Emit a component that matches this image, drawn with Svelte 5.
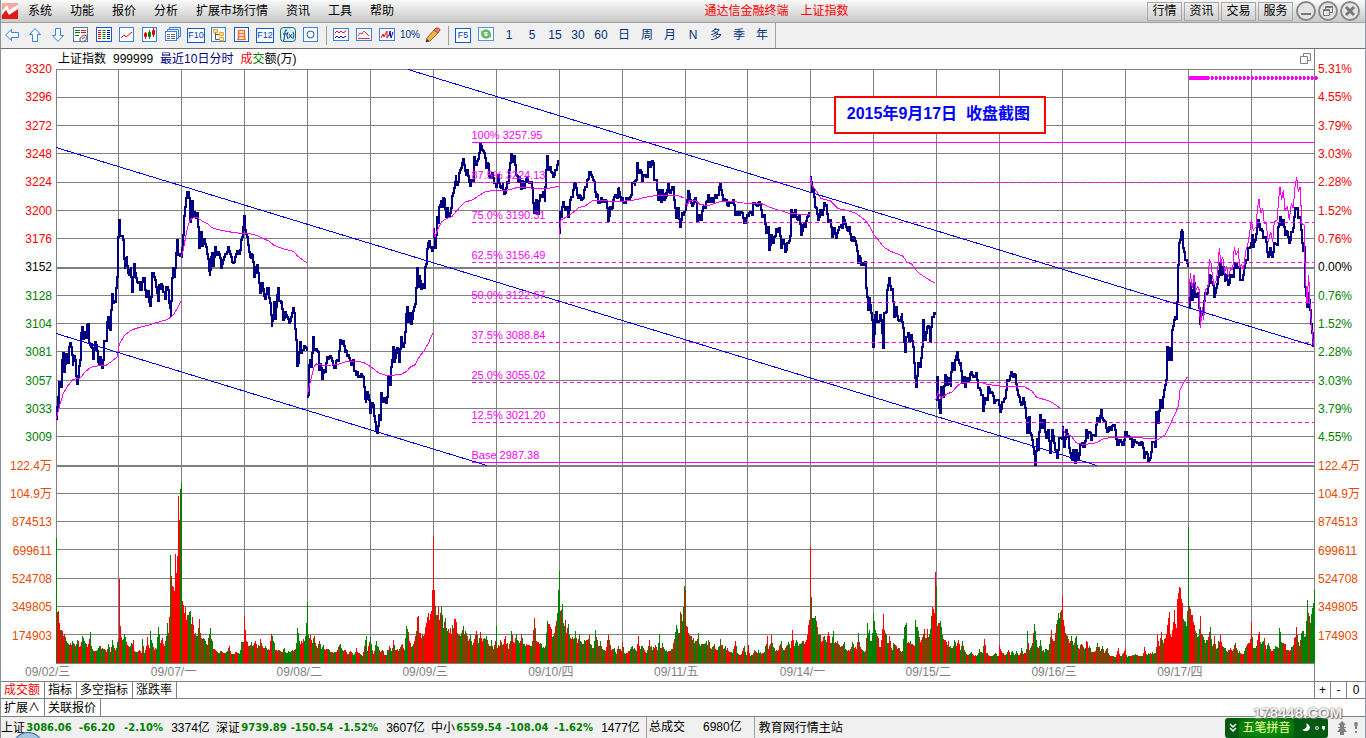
<script>
    const menus = ["系统", "功能", "报价", "分析", "扩展市场行情", "资讯", "工具", "帮助"];
    const panels = ["行情", "资讯", "交易", "服务"];
    const periods = ["1", "5", "15", "30", "60", "日", "周", "月", "N", "多", "季", "年"];
    const dates = ["09/02/三", "09/07/一", "09/08/二", "09/09/三", "09/10/四", "09/11/五", "09/14/一", "09/15/二", "09/16/三", "09/17/四"];
    const prices = ["3320", "3296", "3272", "3248", "3224", "3200", "3176", "3152", "3128", "3104", "3081", "3057", "3033", "3009"];
    const percents = ["5.31%", "4.55%", "3.79%", "3.03%", "2.28%", "1.52%", "0.76%", "0.00%", "0.76%", "1.52%", "2.28%", "3.03%", "3.79%", "4.55%"];
    const amounts = ["122.4万", "104.9万", "874513", "699611", "524708", "349805", "174903"];
    const tabs = ["成交额", "指标", "多空指标", "涨跌率"];
    const stocks = [
        { name: "上证", price: "3086.06", change: "-66.20", pct: "-2.10%", amount: "3374亿" },
        { name: "深证", price: "9739.89", change: "-150.54", pct: "-1.52%", amount: "3607亿" },
        { name: "中小", price: "6559.54", change: "-108.04", pct: "-1.62%", amount: "1477亿" }
    ];
    const fibs = [
        { y: 142, text: "100% 3257.95" },
        { y: 182, text: "87.5% 3224.13" },
        { y: 222, text: "75.0% 3190.31" },
        { y: 262, text: "62.5% 3156.49" },
        { y: 302, text: "50.0% 3122.67" },
        { y: 342, text: "37.5% 3088.84" },
        { y: 382, text: "25.0% 3055.02" },
        { y: 422, text: "12.5% 3021.20" },
        { y: 462, text: "Base 2987.38" }
    ];

    // chart space of the plot
    const plot = { x: 56, y: 69, w: 1259, h: 595 };
    const rows = [69, 97, 125, 153, 182, 210, 238, 295, 323, 351, 380, 408, 436, 493, 521, 549, 578, 606, 634, 663];
    const cols = [56, 118, 181, 244, 307, 370, 433, 496, 559, 622, 685, 747, 810, 873, 936, 999, 1062, 1125, 1188, 1251, 1314];

    // points are stored in thirds of a unit from the origin of each block
    const sessions = [
        {
            ox: 0, oy: 130,
            price: "169,866 173,800 178,835 178,755 183,770 186,690 189,668 193,725 197,672 202,690 204,698 208,650 212,638 215,655 218,708 222,678 226,690 228,738 232,762 236,735 240,690 243,610 246,592 250,628 254,602 258,625 262,585 265,583 268,640 272,650 275,640 279,688 283,660 286,636 290,650 293,670 297,705 300,680 304,700 307,714 310,690 313,632 319,632 322,575 324,560 328,595 332,590 336,492 340,518 346,515 349,475 352,440 355,320 356,266 360,275 361,318 368,315 371,345 374,418 377,380 380,378 384,430 388,435 392,412 394,440 397,485 400,440 402,402 405,430 409,445 414,460 419,462 423,480 427,455 431,443 434,460 438,500 443,480 446,490 450,527 453,500 456,430 460,428 464,450 469,470 473,512 478,465 482,480 484,462 488,475 492,485 496,508 499,470 504,480 508,520 512,562 515,480 518,412 522,440 526,415 529,370 531,330 535,375 541,378 544,380",
            avg: "169,868 178,830 190,790 203,768 220,748 240,745 255,726 272,712 290,708 318,706 335,694 352,680 355,665 358,642 375,614 395,600 415,593 440,587 455,582 480,575 500,569 512,562 522,552 535,530 544,512"
        },
        {
            ox: 0, oy: 130,
            price: "544,380 548,345 551,290 554,230 559,205 563,183 567,205 571,275 573,240 577,212 580,260 584,242 588,265 591,250 595,290 597,355 602,325 604,305 608,352 612,328 617,350 622,372 626,395 629,438 632,395 636,370 640,408 643,380 646,350 650,375 655,365 659,385 664,415 668,395 672,380 678,372 684,352 688,362 693,380 700,398 705,380 710,362 716,372 721,360 725,320 730,290 733,258 736,300 741,322 745,345 750,382 755,368 759,395 763,440 768,410 771,405 776,460 781,490 786,460 791,498 796,508 800,475 805,475 809,520 815,590 819,560 822,515 825,568 830,500 834,475 838,512 845,512 849,570 854,545 860,560 866,578 872,570 876,550 880,535 884,550 888,630 892,708 896,680 899,635 904,670 910,660 914,652 920,662",
            avg: "544,380 550,360 557,320 563,290 570,270 580,263 592,263 605,272 625,282 635,293 655,299 685,305 720,310 750,311 775,318 795,328 808,334 822,346 845,355 880,364 895,380 920,398"
        },
        {
            ox: 300, oy: 120,
            price: "22,830 24,825 27,735 30,720 33,740 37,700 40,650 43,690 50,685 54,695 57,750 62,730 66,776 71,750 76,755 80,710 85,718 90,708 95,710 99,735 105,745 110,720 116,715 119,660 124,672 130,662 134,700 138,692 144,705 148,715 153,735 158,720 163,752 167,765 172,755 178,768 184,762 190,770 194,830 197,848 201,815 206,840 211,880 216,850 221,855 225,905 231,940 236,885 241,900 244,820 248,850 252,835 258,848 262,830 265,770 270,795 274,740 279,682 283,725 287,690 292,685 297,725 302,650 308,685 312,670 317,610 321,562 325,605 329,580 334,612 338,590 342,560 347,545 350,445 355,500 359,465 363,508 368,490 372,505 376,440 380,420 384,370 388,362 392,385 398,388 401,385",
            avg: "22,826 27,800 35,770 42,740 50,732 70,736 95,735 115,733 140,724 165,724 190,727 215,742 235,758 255,765 280,766 305,762 320,754 330,742 345,734 355,715 372,692 385,670 398,640"
        },
        {
            ox: 300, oy: 120,
            price: "401,325 405,385 408,345 411,290 415,310 418,260 422,240 426,260 430,235 434,245 437,290 442,265 446,295 450,280 455,250 459,220 463,205 467,165 471,195 476,180 480,150 485,140 489,117 494,145 498,165 502,150 506,170 509,198 514,180 519,185 523,110 528,135 533,120 537,100 541,70 546,90 552,98 557,145 562,130 566,150 570,175 575,160 580,175 585,190 590,205 594,165 598,190 603,205 608,190 612,222 617,205 622,185 626,178 630,130 633,102 638,125 644,105 648,165 653,185 658,170 663,208 668,180 672,205 676,185 680,170 686,190 692,185 697,205 702,280 707,240 712,282 716,270 719,225 725,230 730,215 734,245 738,150 741,108 745,150 749,140 754,155 760,170 764,150 770,135 775,120",
            avg: "399,325 405,350 415,325 425,305 440,295 455,290 470,272 495,246 520,239 535,228 555,216 580,211 620,211 650,203 690,203 710,206 740,206 760,202 777,199"
        },
        {
            ox: 300, oy: 120,
            price: "778,340 779,275 784,290 789,245 794,270 800,260 805,290 811,240 817,230 822,190 828,205 833,235 838,225 843,240 848,235 853,210 858,200 862,180 867,155 872,165 878,180 883,185 887,235 891,225 895,250 902,235 908,245 915,240 920,265 925,303 930,260 936,265 940,240 945,225 950,235 955,205",
            avg: "778,342 783,300 800,290 820,277 835,263 855,258 880,241 910,241 930,244 960,244"
        },
        {
            ox: 600, oy: 120,
            price: "55,205 60,230 67,235 73,250 80,235 87,238 92,225 97,190 104,198 108,180 112,130 117,160 122,155 127,185 133,165 140,170 145,125 150,140 155,132 159,130 163,180 170,185 174,240 178,210 182,245 187,210 192,240 197,215 200,230 204,192 208,215 214,210 219,200 223,240 229,295 234,265 241,320 246,280 251,275 256,272",
            avg: "60,243 75,243 110,239 130,233 165,227 200,226 235,227 252,234"
        },
        {
            ox: 600, oy: 120,
            price: "256,270 261,240 265,212 270,240 275,258 282,240 288,245 292,303 298,285 303,300 308,262 314,265 319,245 323,225 328,245 334,235 340,245 345,225 350,225 356,215 360,192 364,210 370,240 376,240 381,255 388,245 395,250 400,240 404,285 410,275 417,285 424,275 429,295 433,310 440,285 447,280 455,285 460,250 467,255 474,250 480,255 485,290 492,285 498,340 503,320 508,390 513,345 518,370 523,350 529,328 535,335 538,325 543,385 548,360 556,395 561,370 567,362 572,345 574,270 580,290 586,270 592,298 598,285 603,345 608,315 616,320 622,290 628,275",
            avg: "256,250 262,255 268,243 285,240 300,253 325,257 345,250 365,244 400,244 430,249 485,251 510,262 535,270 565,279 600,283 631,285"
        },
        {
            ox: 600, oy: 120,
            price: "631,172 636,215 641,205 645,260 650,265 654,300 660,270 665,285 672,250 679,255 684,305 690,300 697,352 703,325 708,355 713,330 719,320 725,325 730,290 735,312 741,330 748,320 753,360 758,352 764,350 768,375 773,430 778,408 783,435 789,430 795,425 798,505 803,570 809,530 813,580 817,600 820,680 824,600 828,575 832,605 839,585 844,600 849,685 853,580 860,570 862,510 866,475 872,510 878,515 882,590 888,560 893,600 899,600 905,580 909,625 915,695 919,650 924,640 928,665 933,645 938,680 943,730 948,800 953,730 960,740 965,680 970,600 975,660 981,620 986,625 991,665 996,590 1003,580 1006,575",
            avg: "631,172 636,195 650,215 662,235 690,242 715,266 745,272 768,280 795,300 810,320 822,345 835,360 850,380 870,393 908,408 920,425 935,432 955,458 985,478 1006,490"
        },
        {
            ox: 920, oy: 160,
            price: "47,720 52,650 55,720 60,760 64,680 69,710 75,645 80,675 86,655 92,680 96,610 102,630 106,600 111,575 116,610 122,605 126,670 131,650 136,680 141,655 148,660 153,635 160,650 168,640 173,685 180,690 185,705 190,752 195,715 200,720 205,680 211,700 217,700 223,730 229,720 236,735 241,755 247,725 254,715 260,660 267,660 272,635 278,650 286,645 290,690 297,710 303,735 309,715 315,745 321,820 327,770 330,820 335,840 340,860 345,915 350,835 354,870 360,765 365,805 370,780 378,835 383,810 390,880 396,810 402,850 406,870 412,895 418,835 425,840",
            avg: "47,720 55,695 62,715 80,703 97,695 115,675 130,667 185,667 200,673 245,679 310,679 335,692 350,712 385,722 400,730 423,746"
        },
        {
            ox: 920, oy: 160,
            price: "427,802 432,860 437,810 443,830 450,880 455,900 460,870 465,910 469,870 475,900 480,855 490,860 497,810 502,835 508,815 514,840 520,825 527,820 531,775 538,785 543,750 548,780 555,785 560,815 567,800 573,810 580,795 586,810 592,855 600,840 607,855 614,815 620,830 627,830 635,860 642,840 650,850 658,855 665,850 671,895 677,875 683,902 690,895 697,845 704,860 709,755 715,790 720,720 727,745 733,690 738,660 742,560 747,600 749,560 752,600 757,510 762,480 768,478 773,390 777,250 782,215 787,215 790,265 796,300 803,322",
            avg: "427,802 438,825 452,826 468,848 490,854 530,848 550,836 580,832 640,832 680,835 715,838 735,825 750,795 762,768 775,740 780,690 795,660 803,650"
        },
        {
            ox: 920, oy: 160,
            price: "806,440 811,370 815,420 821,370 826,410 833,400 839,495 843,455 850,460 855,400 862,400 868,345 873,370 878,375 883,410 889,385 894,350 899,310 904,345 909,320 914,365 918,345 925,375 931,345 937,350 945,310 951,325 957,320 961,360 970,345 975,310 980,300 985,265 990,260 995,225 1000,260 1006,240 1010,200 1015,180 1020,210 1025,205 1029,235 1035,230 1040,275 1045,290 1050,265 1055,290 1061,250 1070,255 1075,200 1079,170 1084,195 1089,180 1094,225 1100,215 1108,250 1113,215 1120,205 1126,145 1130,145 1135,175 1140,175 1145,230 1148,275 1152,260 1156,380 1160,440 1166,395 1170,450 1176,520 1180,560",
            avg: "806,430 811,340 817,385 822,345 827,390 833,380 838,390 841,505 847,440 851,480 857,390 864,380 868,300 873,310 877,345 882,375 889,360 893,330 898,265 903,310 908,290 914,335 920,320 925,350 932,325 938,330 943,260 948,285 955,270 959,320 965,315 970,330 978,270 984,250 990,210 994,180 1000,210 1008,200 1012,150 1017,118 1022,160 1028,145 1033,190 1038,190 1045,245 1052,215 1058,245 1063,185 1072,180 1075,130 1080,80 1085,120 1090,90 1095,150 1102,140 1108,180 1114,130 1120,145 1125,80 1130,52 1135,95 1141,80 1145,190 1152,195 1156,340 1161,430 1166,345 1171,450 1177,520 1181,555"
        }
    ];

    // x,height of the turnover bars
    const turnover = "56,125 57,51 58,52 59,40 61,33 64,29 66,22 69,18 72,22 75,17 77,23 80,17 82,27 87,16 90,31 91,17 95,12 100,17 104,14 106,11 108,19 110,11 112,23 115,13 117,21 118,24 119,84 120,37 122,23 124,29 127,18 130,17 133,23 134,12 139,13 141,10 142,24 144,10 147,26 149,15 150,32 153,16 156,14 158,36 160,20 162,25 164,17 167,40 168,30 169,46 170,108 171,87 173,76 174,72 175,109 176,90 177,107 178,167 179,143 180,174 181,180 182,62 184,50 185,56 187,48 189,51 192,46 193,38 195,30 197,27 199,44 201,25 204,24 207,18 210,35 212,22 213,14 217,11 221,12 225,10 229,17 231,9 236,11 239,9 241,21 243,21 244,47 246,22 248,17 251,21 252,17 255,22 257,15 260,24 262,17 265,17 269,13 271,29 273,22 276,13 280,12 284,15 285,11 294,13 296,20 297,35 299,22 303,24 305,27 306,40 307,61 308,29 310,28 312,20 314,27 316,17 319,22 321,14 323,18 325,13 328,14 332,11 336,11 340,19 343,12 345,13 348,9 350,12 353,8 356,15 358,10 362,7 364,17 366,27 367,12 370,26 373,9 376,22 379,13 382,13 385,8 389,17 391,12 393,23 395,13 399,14 402,19 404,13 406,37 408,31 410,20 413,19 415,27 417,46 418,47 419,30 423,27 426,40 428,50 431,52 432,73 433,127 434,73 435,57 436,48 438,56 439,43 441,56 443,35 445,45 448,34 449,30 452,38 455,44 458,28 463,37 466,30 468,22 470,29 472,18 474,24 476,32 478,20 480,31 483,24 486,27 489,17 491,23 493,14 495,22 496,37 497,15 500,23 502,18 505,27 508,14 511,32 514,20 516,29 519,20 521,29 523,19 530,17 532,22 534,45 536,22 541,19 545,17 547,42 550,36 553,27 555,37 557,50 558,73 559,92 560,52 562,59 563,40 565,43 566,30 568,39 570,25 573,24 575,32 577,20 579,29 581,21 585,22 589,28 591,18 593,15 595,33 598,17 600,22 602,14 605,12 608,28 611,13 614,15 616,9 618,17 621,12 622,21 624,10 629,12 632,17 636,12 638,27 640,14 642,17 645,11 647,13 649,23 652,13 655,18 657,13 659,29 660,15 662,20 665,12 671,14 673,20 676,38 679,30 680,51 682,42 684,77 685,73 686,37 688,30 691,27 695,22 698,30 699,19 704,19 708,23 711,14 714,19 717,13 720,24 723,14 725,17 728,12 732,10 735,22 737,10 741,9 744,17 746,8 748,18 750,7 752,8 754,13 756,11 758,13 761,9 764,11 767,27 768,14 771,28 774,15 777,12 781,22 783,13 788,21 790,15 792,33 794,17 796,23 798,17 802,22 806,23 808,38 809,43 810,116 811,66 812,45 815,47 817,36 820,28 822,22 824,27 826,21 828,31 830,20 833,32 834,20 837,22 842,17 844,21 846,13 850,14 852,21 856,14 858,30 860,16 865,12 867,40 869,33 870,22 872,30 873,50 875,33 877,27 880,16 883,49 885,30 888,20 889,27 892,13 893,20 899,15 902,12 904,36 906,40 907,20 910,22 914,17 915,43 918,32 921,23 924,34 925,25 927,34 928,26 931,47 932,56 934,50 935,91 936,77 937,37 940,42 942,28 945,23 948,22 951,15 954,23 956,17 958,23 960,13 962,22 964,13 967,8 971,11 976,7 979,14 982,10 984,24 986,10 991,7 995,10 998,7 999,18 1002,10 1005,8 1008,13 1010,8 1012,12 1014,8 1016,12 1019,8 1021,15 1023,9 1026,14 1027,32 1029,13 1032,20 1034,39 1036,23 1038,15 1040,23 1042,12 1045,14 1048,13 1051,33 1053,22 1055,30 1058,50 1059,45 1061,53 1062,67 1063,43 1065,30 1067,27 1069,20 1071,27 1073,18 1076,27 1078,15 1081,19 1084,14 1086,22 1090,15 1092,11 1095,12 1097,20 1100,12 1102,17 1104,10 1107,15 1109,8 1115,6 1118,15 1120,7 1125,14 1127,6 1133,8 1135,9 1138,7 1142,7 1144,16 1146,9 1152,11 1155,10 1157,28 1159,17 1161,31 1163,20 1166,29 1169,51 1170,28 1172,33 1174,53 1176,35 1177,64 1180,75 1182,60 1183,44 1186,37 1187,52 1188,136 1189,57 1191,48 1194,38 1196,30 1198,27 1200,47 1201,29 1204,23 1207,23 1210,36 1212,17 1214,27 1216,14 1220,28 1222,17 1225,15 1227,11 1230,15 1232,12 1235,20 1237,13 1243,9 1246,17 1248,20 1250,24 1251,41 1253,15 1255,15 1259,31 1261,19 1264,25 1266,14 1268,20 1271,12 1275,17 1278,15 1279,35 1282,20 1285,19 1287,13 1292,16 1296,36 1299,17 1301,30 1303,32 1305,27 1307,63 1308,50 1310,40 1312,55 1313,60 1314,73";
    // stretches that close one way: from, to, up
    const runs = [[56, 56, 0], [57, 60, 1], [119, 119, 1], [170, 170, 0], [171, 179, 1], [180, 181, 0], [182, 187, 1], [189, 190, 0], [244, 244, 1], [285, 291, 0], [297, 299, 0], [307, 307, 0], [366, 367, 0], [417, 418, 1], [423, 430, 1], [432, 434, 1], [445, 446, 0], [559, 559, 0], [562, 562, 0], [676, 678, 0], [684, 684, 0], [685, 687, 1], [806, 810, 1], [811, 815, 0], [867, 868, 0], [873, 873, 0], [883, 884, 1], [904, 906, 0], [932, 935, 1], [936, 936, 0], [1058, 1060, 0], [1062, 1062, 1], [1166, 1182, 1], [1183, 1186, 0], [1188, 1188, 0], [1189, 1194, 1], [1251, 1251, 1], [1302, 1308, 0], [1309, 1309, 1], [1310, 1314, 0]];

    function random(seed) {
        return () => (seed = (seed * 16807) % 2147483647) / 2147483647;
    }

    function parse(text, ox, oy) {
        return text.split(" ").map((p) => {
            const [x, y] = p.split(",").map(Number);
            return [ox + x / 3, oy + y / 3];
        });
    }

    function toPoints(text, ox, oy) {
        return parse(text, ox, oy).map(([x, y]) => x.toFixed(1) + "," + y.toFixed(1)).join(" ");
    }

    // minute ticks: a stepped line with a little noise between the stored points
    function toSteps(text, ox, oy) {
        const pts = parse(text, ox, oy);
        const next = random(pts.length * 31);
        let d = `M${Math.round(pts[0][0])} ${Math.round(pts[0][1])}`;
        for (let i = 1; i < pts.length; i++) {
            const [ax, ay] = pts[i - 1];
            const [bx, by] = pts[i];
            if (bx - ax >= 1) {
                const noise = next() < 0.5 ? -3 : 3;
                d += `H${Math.round((ax + bx) / 2)}V${Math.round((ay + by) / 2 + noise * next())}`;
            }
            d += `H${Math.round(bx)}V${Math.round(by)}`;
        }
        return d;
    }

    function buildBars() {
        const marks = turnover.split(" ").map((p) => p.split(",").map(Number));
        const next = random(7);
        let up = "";
        let down = "";
        let isUp = true;
        let left = 0;
        for (let i = 0; i < marks.length; i++) {
            const [x, h] = marks[i];
            const [nx, nh] = marks[i + 1] || [x + 1, h];
            for (let k = x; k < nx; k++) {
                let height = h + ((nh - h) * (k - x)) / (nx - x);
                if (k > x) height = Math.max(5, Math.round(height * (0.82 + next() * 0.25)));
                if (left-- <= 0) {
                    isUp = !isUp;
                    left = Math.floor(next() * 4);
                }
                const run = runs.find((r) => k >= r[0] && k <= r[1]);
                const bar = `M${k} 663v-${height}h1v${height}z`;
                if (run ? run[2] : isUp) up += bar;
                else down += bar;
            }
        }
        return { up, down };
    }

    const bars = buildBars();
    const tone = (i) => (i < 7 ? "up" : i == 7 ? "flat" : "down");
    const top = (y) => ((y - plot.y) / plot.h) * 100;
</script>

<div class="app">
    <header class="titlebar">
        <svg class="logo" width="16" height="16" viewBox="0 0 16 16">
            <rect width="16" height="16" fill="#e01818" />
            <path d="M0 0h16v4L8 9 5 5 0 10z" fill="#f4a9a0" />
            <path d="M0 8l5-6 2 5 9-5v4l-9 6-3-5-4 5z" fill="#fff" />
        </svg>
        <nav class="menu">
            {#each menus as item}
                <button>{item}</button>
            {/each}
        </nav>
        <h1><span>通达信金融终端</span><span>上证指数</span></h1>
        <div class="panels">
            {#each panels as item}
                <button>{item}</button>
            {/each}
        </div>
        <div class="win">
            <button aria-label="最小化">
                <svg width="20" height="20" viewBox="0 0 20 20"><circle cx="10" cy="10" r="9" /><path d="M5 13h10" stroke-width="2" /></svg>
            </button>
            <button aria-label="还原">
                <svg width="20" height="20" viewBox="0 0 20 20"><circle cx="10" cy="10" r="9" /><path d="M7.500 8.500V5.500h7v6h-3M5.500 8.500h6v6h-6zM5 9.500h7M7 6.500h8" /></svg>
            </button>
            <button aria-label="关闭">
                <svg width="20" height="20" viewBox="0 0 20 20"><circle cx="10" cy="10" r="9" /><path d="M6 6l8 8M14 6l-8 8" stroke-width="3" /></svg>
            </button>
        </div>
    </header>

    <div class="toolbar">
        <button aria-label="后退"><svg width="16" height="16" viewBox="0 0 16 16"><path d="M1.500 8L7.500 2.500V5.500h7v5h-7v3z" fill="#fff" stroke="#3b82e8" /></svg></button>
        <button aria-label="上翻"><svg width="16" height="16" viewBox="0 0 16 16"><path d="M8 1.500L2.500 7.500H5.500v7h5v-7h3z" fill="#fff" stroke="#3b82e8" /></svg></button>
        <button aria-label="下翻"><svg width="16" height="16" viewBox="0 0 16 16"><path d="M8 14.500L2.500 8.500H5.500v-7h5v7h3z" fill="#fff" stroke="#3b82e8" /></svg></button>
        <button aria-label="自选">
            <svg width="16" height="16" viewBox="0 0 16 16">
                <rect x=".5" y=".5" width="14" height="14" fill="#fff" stroke="#5577aa" />
                <path d="M2 3.500h5M2 5.500h5M2 8.500h4" stroke="#008000" />
                <path d="M8 3.500h5M8 5.500h5" stroke="#e00" />
                <path d="M7 11l4-3 3 1-1 4-4 2-2-1zM9 12l3-2" fill="#eee" stroke="#666" />
            </svg>
        </button>
        <button aria-label="行情列表">
            <svg width="16" height="16" viewBox="0 0 16 16">
                <rect x=".5" y=".5" width="15" height="14" fill="#fff" stroke="#0a5ae0" />
                <path d="M2 3.500h3M2 5.500h3M2 7.500h3M2 9.500h3M2 11.500h3" stroke="#e00" />
                <path d="M6.500 3.500h3M6.500 5.500h3M6.500 7.500h3M6.500 9.500h3M6.500 11.500h3" stroke="#008000" />
                <path d="M11 3.500h3M11 5.500h3M11 7.500h3M11 9.500h3M11 11.500h3" stroke="#00c" />
            </svg>
        </button>
        <button aria-label="分时图">
            <svg width="16" height="16" viewBox="0 0 16 16">
                <rect x=".5" y=".5" width="14" height="14" fill="#fff" stroke="#3b82e8" />
                <path d="M2 11l3-3 2 2 6-5" fill="none" stroke="#e00" />
            </svg>
        </button>
        <button aria-label="K线图">
            <svg width="16" height="16" viewBox="0 0 16 16">
                <rect x=".5" y=".5" width="14" height="14" fill="#fff" stroke="#3b82e8" />
                <path d="M3.500 5v7M11.500 1v9M2.500 6.500h2v3h-2zM10.500 3.500h2v4h-2z" fill="#e00" stroke="#e00" />
                <path d="M7.500 3v9M6.500 5.500h2v4h-2z" fill="#008000" stroke="#008000" />
            </svg>
        </button>
        <button aria-label="多窗口">
            <svg width="16" height="16" viewBox="0 0 16 16">
                <path d="M4.500 3V.500h11v9H14M2.500 5V2.500h11v9H12" fill="none" stroke="#3b82e8" />
                <rect x=".5" y="4.500" width="11" height="9" fill="#fff" stroke="#3b82e8" />
                <path d="M2 7.500h3M2 9.500h3M2 11.500h3M6 7.500h4M6 9.500h4M6 11.500h4" stroke="#667" />
            </svg>
        </button>
        <button><span class="key">F10</span></button>
        <button aria-label="板块">
            <svg width="16" height="16" viewBox="0 0 16 16">
                <rect x=".5" y=".5" width="14" height="14" fill="#fff" stroke="#3b82e8" />
                <path d="M4.500 6v6.500h4M4.500 7.500h4" fill="none" stroke="#555" />
                <path d="M2.500 2.500h4v3h-4zM8.500 5.500h4v3h-4zM8.500 10.500h4v3h-4z" fill="#ffe9a0" stroke="#f0a020" />
            </svg>
        </button>
        <button aria-label="自定义">
            <svg width="16" height="16" viewBox="0 0 16 16">
                <rect x=".5" y=".5" width="14" height="14" fill="#fff" stroke="#0a5ae0" />
                <path d="M4.500 3.500h6v9h-6zM4 6.500h7M4 9.500h7M3 12.500h9" fill="none" stroke="#f07030" stroke-width="1.500" />
            </svg>
        </button>
        <button><span class="key">F12</span></button>
        <button aria-label="公式">
            <svg width="16" height="16" viewBox="0 0 16 16">
                <rect x=".5" y=".5" width="15" height="14" rx="3" fill="#d8eeee" stroke="#0a7080" />
                <path d="M7 3q-2-1-2 2l-1 8q0 1-1 0M3 7h4M8 5q-2 3 0 7M13 5q2 3 0 7M9 7l3 4M12 7l-3 4" fill="none" stroke="#113a8a" />
            </svg>
        </button>
        <button aria-label="圈选">
            <svg width="16" height="16" viewBox="0 0 16 16">
                <rect x=".5" y=".5" width="14" height="14" fill="#fff" stroke="#3b82e8" />
                <circle cx="7.500" cy="7.500" r="3.500" fill="none" stroke="#0a5aa0" />
            </svg>
        </button>
        <i class="sep"></i>
        <button aria-label="叠加">
            <svg width="16" height="16" viewBox="0 0 16 16">
                <rect x=".5" y="1.500" width="15" height="12" fill="#fff" stroke="#3b82e8" />
                <path d="M2 6l2-2 2 2 2-2 2 2 3-2" fill="none" stroke="#e00" />
                <path d="M2 11l2-2 2 2 2-2 2 2 3-2" fill="none" stroke="#00c" />
            </svg>
        </button>
        <button aria-label="移动成本">
            <svg width="16" height="16" viewBox="0 0 16 16">
                <rect x=".5" y="1.500" width="15" height="12" fill="#fff" stroke="#3b82e8" />
                <path d="M2 9l2-3 2 1 2-3 3 3 2 2M2 11.500h12" fill="none" stroke="#e33" />
            </svg>
        </button>
        <button aria-label="指标">
            <svg width="16" height="16" viewBox="0 0 16 16">
                <rect x=".5" y="1.500" width="15" height="12" fill="#fff" stroke="#3b82e8" />
                <path d="M2 11l2-4 1 3 3-6v7l2-3" fill="none" stroke="#e00" />
                <path d="M10 9l1-5 1 7 2-6" fill="none" stroke="#00c" />
            </svg>
        </button>
        <button><span class="ten">10%</span></button>
        <button aria-label="画线">
            <svg width="16" height="16" viewBox="0 0 16 16">
                <path d="M2 11l7-8 4 3-8 8-4 1z" fill="#f0b04c" stroke="#9a6a20" />
                <path d="M9 3l2-2q3-1 4 2l-2 3z" fill="#e87868" stroke="#a45040" />
                <path d="M1 15l1-3 2 2z" fill="#222" />
            </svg>
        </button>
        <i class="sep"></i>
        <button><span class="key">F5</span></button>
        <button aria-label="刷新">
            <svg width="16" height="16" viewBox="0 0 16 16">
                <rect x=".5" y=".5" width="15" height="13" fill="#fff" stroke="#5b92e8" />
                <path d="M4 6q4-5 8 0M12 8q-4 5-8 0" fill="none" stroke="#5cb85c" stroke-width="2.500" />
                <path d="M3 3v5h5zM13 11V6H8z" fill="#6cc46c" />
            </svg>
        </button>
        {#each periods as item}
            <button>{item}</button>
        {/each}
        <i class="end"></i>
    </div>

    <main class="chart">
        <div class="head">
            <span>上证指数</span>
            <span>999999</span>
            <span class="navy">最近10日分时</span>
            <span><b class="up">成</b><b class="down">交</b>额(万)</span>
            <button class="pop" aria-label="窗口">
                <svg width="12" height="12" viewBox="0 0 12 12"><path d="M3.500 3V.500h7v7H8M.500 3.500h7v7h-7z" fill="none" stroke="#808080" /></svg>
            </button>
        </div>

        <div class="axis left">
            {#each prices as label, i}
                <span class={tone(i)}>{label}</span>
            {/each}
            {#each amounts as label}
                <span class="amt">{label}</span>
            {/each}
        </div>

        <div class="plot">
            <svg viewBox="{plot.x} {plot.y} {plot.w} {plot.h}" preserveAspectRatio="none" shape-rendering="crispEdges">
                {#each rows as y}
                    <path class="grid" d="M56 {y + 0.5}H1315" />
                {/each}
                {#each cols as x}
                    <path class="grid" d="M{x + 0.5} 69V664" />
                {/each}
                <path class="grid thick" d="M56 268H1315M56 466H1315" />
                <path fill="#ff0000" d={bars.up} />
                <path fill="#008000" d={bars.down} />
                {#each sessions as s}
                    <path class="price" d={toSteps(s.price, s.ox, s.oy)} />
                {/each}
                {#each sessions as s}
                    <polyline class="avg" points={toPoints(s.avg, s.ox, s.oy)} />
                {/each}
                {#each fibs as f, i}
                    <path class="fib" class:dash={i > 0 && i < 8} d="M472 {f.y + 0.5}H1314" />
                {/each}
                <path class="trend" d="M56 147.500L1097 465.500M56 333.500L487 465.500M408 69.500L1314 346" />
                <path fill="#ff00ff" d="M1189 76h18v4h-18z" />
                <path class="beads" d="M1207 76.500H1318M1207 79.500H1318" />
                <path class="beads mid" d="M1207 78H1318" />
            </svg>
            {#each fibs as f}
                <span class="fiblabel" style="top: {top(f.y)}%">{f.text}</span>
            {/each}
            <div class="note">2015年9月17日&nbsp; 收盘截图</div>
        </div>

        <div class="axis right">
            {#each percents as label, i}
                <span class={tone(i)}>{label}</span>
            {/each}
            {#each amounts as label}
                <span class="amt">{label}</span>
            {/each}
        </div>

        <div class="dates">
            {#each dates as d}
                <span>{d}</span>
            {/each}
        </div>
    </main>

    <div class="tabs">
        {#each tabs as tab, i}
            <button class:active={i == 0}>{tab}</button>
        {/each}
        <div class="zoom">
            <button>+</button>
            <button>-</button>
            <button>0</button>
        </div>
    </div>
    <div class="tabs second">
        <button>扩展∧</button>
        <button>关联报价</button>
    </div>

    <footer class="status">
        {#each stocks as s}
            <div class="stock">
                <span>{s.name}</span>
                <b>{s.price}</b>
                <b>{s.change}</b>
                <b>{s.pct}</b>
                <span>{s.amount}</span>
            </div>
        {/each}
        <div class="total"><span>总成交</span><span>6980亿</span></div>
        <div class="host">教育网行情主站</div>
        <div class="ime">
            <svg width="14" height="20" viewBox="0 0 14 20"><path d="M5 6l3 3 3-3M5 10l3 3 3-3" fill="none" stroke="#fff" stroke-width="1.500" /></svg>
            <span>五笔拼音</span>
            <svg width="34" height="20" viewBox="0 0 34 20">
                <path d="M12 5q3 5-4 7 6 3 8-2 0-3-4-5z" fill="#fff" />
                <circle cx="23" cy="10" r="1.500" fill="none" stroke="#fff" />
                <path d="M28 8h3v3l-2 2v-2h-1z" fill="#fff" />
            </svg>
            <em>178448.COM</em>
        </div>
        <div class="signs">
            <svg width="12" height="16" viewBox="0 0 12 16"><path d="M6 1l4 4H8v2h2v1H8l3 4H8v3H4v-3H1l3-4H2V7h2V5H2z" fill="#808080" /></svg>
            <svg width="12" height="16" viewBox="0 0 12 16"><path d="M6 2q3 0 1 5v2H5V7Q3 2 6 2zM5 11h2v2H5z" fill="#808080" /></svg>
        </div>
        <i class="orb"></i>
    </footer>
</div>

<style>
    :global(body) {
        margin: 0;
    }
    .app {
        min-height: 100vh;
        box-sizing: border-box;
        display: flex;
        flex-direction: column;
        position: relative;
        overflow: hidden;
        border-left: 1px solid #8a9099;
        border-right: 1px solid #7f95b0;
        background: #fff;
        color: #000;
        font: 12px/16px "Liberation Sans", "Noto Sans CJK SC", sans-serif;
        white-space: nowrap;
    }
    button {
        padding: 0;
        border: 0;
        background: none;
        color: inherit;
        font: inherit;
        cursor: pointer;
    }
    svg {
        display: block;
    }
    .up {
        color: #ff0000;
    }
    .down {
        color: #008000;
    }
    .navy {
        color: #000080;
    }
    .amt {
        color: #e84a00;
    }

    .titlebar {
        height: 22px;
        display: flex;
        align-items: center;
        border-bottom: 1px solid #a0a0a0;
        background: linear-gradient(#fafafa, #c8c8c8);
    }
    .logo {
        margin-left: 1px;
    }
    .menu {
        display: flex;
        gap: 18px;
        padding: 0 12px 0 10px;
    }
    h1 {
        display: flex;
        gap: 12px;
        margin: 0 auto;
        color: #ff0000;
        font-size: 12px;
        font-weight: normal;
    }
    .panels {
        display: flex;
        gap: 2px;
    }
    .panels button {
        width: 35px;
        height: 19px;
        border: 1px solid #a8a8a8;
        background: linear-gradient(#f0f0f0, #d0d0d0);
    }
    .win {
        display: flex;
        gap: 2px;
        margin: 0 5px 0 3px;
    }
    .win svg {
        fill: none;
        stroke: #777;
    }
    .win circle {
        fill: #e4e4e4;
        stroke: #888;
        stroke-width: 2;
    }

    .toolbar {
        height: 25px;
        display: flex;
        align-items: center;
        border-bottom: 1px solid #707070;
        background: #f0f0f0;
        color: #003080;
    }
    .toolbar button {
        box-sizing: border-box;
        width: 23px;
        height: 23px;
        padding: 0 1px 1px 0;
        display: flex;
        align-items: center;
        justify-content: center;
        flex: none;
    }
    .key {
        min-width: 14px;
        height: 13px;
        border: 1px solid #0a5ae0;
        background: #fff;
        color: #0040c0;
        font-size: 9px;
        line-height: 13px;
        text-align: center;
    }
    .ten {
        font-size: 10px;
    }
    .sep {
        width: 1px;
        height: 19px;
        margin: 0 3px;
        background: #a0a0a0;
    }
    .end {
        width: 1px;
        height: 25px;
        margin-left: 1px;
        background: #a0a0a0;
    }

    .chart {
        flex: 1;
        display: grid;
        grid-template-columns: 55px minmax(0, 1fr) 50px;
        grid-template-rows: 20px minmax(400px, 1fr) 17px;
        border-bottom: 1px solid #808080;
    }
    .head {
        grid-column: 1 / 3;
        display: flex;
        align-items: center;
        gap: 7px;
        padding: 0 2px 0 57px;
        border-right: 1px solid #808080;
    }
    .head b {
        font-weight: normal;
    }
    .pop {
        margin-left: auto;
    }
    .axis {
        grid-row: 2;
        display: flex;
        flex-direction: column;
        margin-top: -8px;
        margin-bottom: 8px;
    }
    .axis span {
        flex: 1;
    }
    .left {
        padding-right: 4px;
        text-align: right;
    }
    .right {
        padding-left: 3px;
    }
    .plot {
        position: relative;
        grid-column: 2;
        grid-row: 2;
    }
    .plot svg {
        position: absolute;
        width: 100%;
        height: 100%;
        overflow: visible;
    }
    .plot path,
    .plot polyline {
        vector-effect: non-scaling-stroke;
    }
    .grid {
        stroke: #808080;
    }
    .thick {
        stroke-width: 2;
    }
    .price {
        fill: none;
        stroke: #000080;
        stroke-width: 2;
    }
    .avg {
        fill: none;
        stroke: #ff00ff;
    }
    .fib {
        stroke: #ff00ff;
    }
    .dash {
        stroke-dasharray: 4 3;
    }
    .trend {
        stroke: #0000ff;
    }
    .beads {
        stroke: #ff00ff;
        stroke-dasharray: 2 2;
    }
    .mid {
        stroke-width: 2;
        stroke-dasharray: 3 1;
    }
    .fiblabel {
        position: absolute;
        left: 33%;
        margin-top: -14px;
        color: #ff00ff;
        font-size: 11px;
        line-height: 14px;
    }
    .note {
        position: absolute;
        top: 27px;
        right: 269px;
        padding: 5px 14px 7px 11px;
        border: 2px solid #ff0000;
        background: #fffffa;
        color: #0000ff;
        font-size: 16px;
        font-weight: bold;
        line-height: 22px;
    }
    .dates {
        grid-column: 1 / 3;
        display: flex;
        padding: 0 31px 0 24px;
        border-right: 1px solid #808080;
        color: #808080;
    }
    .dates span {
        flex: 1 1 0;
    }

    .tabs {
        height: 16px;
        display: flex;
        border-bottom: 1px solid #808080;
    }
    .tabs button {
        padding: 0 4px 0 3px;
        border-right: 1px solid #808080;
    }
    .tabs .active {
        color: #ff0000;
    }
    .second {
        height: 17px;
    }
    .zoom {
        display: flex;
        margin-left: auto;
        border-left: 1px solid #808080;
    }
    .zoom button {
        width: 16px;
        padding: 0;
    }
    .zoom button:last-child {
        width: 18px;
        border-right: 0;
    }

    .status {
        height: 21px;
        display: flex;
        align-items: center;
        background: #f0f0f0;
    }
    .stock {
        display: grid;
        grid-template-columns: 25px 46px 50px 43px 51px;
        align-items: center;
        text-align: center;
    }
    .stock b {
        color: #008000;
        font-family: "DejaVu Sans", sans-serif;
        font-size: 10px;
    }
    .stock span:first-child {
        text-align: left;
    }
    .total {
        display: flex;
        gap: 18px;
        padding: 0 12px 0 2px;
        border-left: 1px solid #a0a0a0;
        border-right: 1px solid #a0a0a0;
        line-height: 21px;
    }
    .host {
        padding-left: 4px;
    }
    .ime {
        position: relative;
        display: flex;
        align-items: center;
        width: 103px;
        height: 20px;
        margin-left: auto;
        border-radius: 3px;
        background: #005a10;
        color: #ffffa0;
    }
    .ime span {
        flex: 1;
        background: radial-gradient(#10a010, #006a08);
        line-height: 20px;
        text-align: center;
    }
    .ime em {
        position: absolute;
        left: 28px;
        top: -16px;
        color: #f0f0f0;
        font: bold 15px/22px "Liberation Sans", sans-serif;
        text-shadow: 0 0 2px #555, 1px 1px 1px #888;
    }
    .signs {
        display: flex;
        gap: 2px;
        margin: 0 3px 0 8px;
    }
    .orb {
        position: absolute;
        left: 12px;
        bottom: -22px;
        width: 28px;
        height: 26px;
        border: 1px solid #3a6a9a;
        border-radius: 50%;
        background: #a8c8e0;
    }
</style>
